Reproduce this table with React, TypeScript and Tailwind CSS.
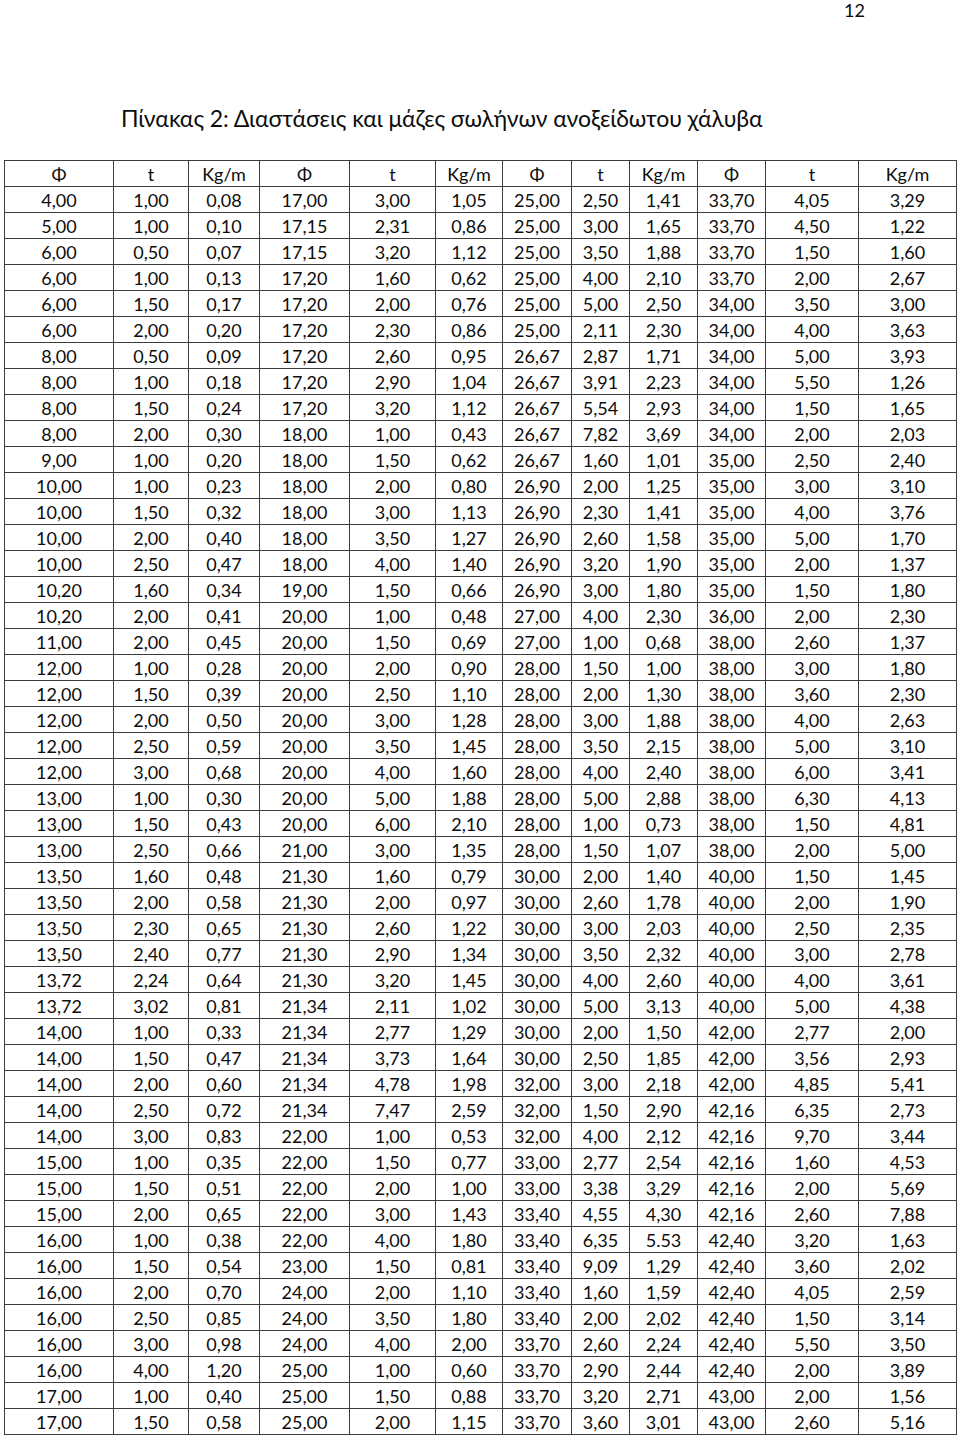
const rows = `4,00 1,00 0,08 17,00 3,00 1,05 25,00 2,50 1,41 33,70 4,05 3,29
5,00 1,00 0,10 17,15 2,31 0,86 25,00 3,00 1,65 33,70 4,50 1,22
6,00 0,50 0,07 17,15 3,20 1,12 25,00 3,50 1,88 33,70 1,50 1,60
6,00 1,00 0,13 17,20 1,60 0,62 25,00 4,00 2,10 33,70 2,00 2,67
6,00 1,50 0,17 17,20 2,00 0,76 25,00 5,00 2,50 34,00 3,50 3,00
6,00 2,00 0,20 17,20 2,30 0,86 25,00 2,11 2,30 34,00 4,00 3,63
8,00 0,50 0,09 17,20 2,60 0,95 26,67 2,87 1,71 34,00 5,00 3,93
8,00 1,00 0,18 17,20 2,90 1,04 26,67 3,91 2,23 34,00 5,50 1,26
8,00 1,50 0,24 17,20 3,20 1,12 26,67 5,54 2,93 34,00 1,50 1,65
8,00 2,00 0,30 18,00 1,00 0,43 26,67 7,82 3,69 34,00 2,00 2,03
9,00 1,00 0,20 18,00 1,50 0,62 26,67 1,60 1,01 35,00 2,50 2,40
10,00 1,00 0,23 18,00 2,00 0,80 26,90 2,00 1,25 35,00 3,00 3,10
10,00 1,50 0,32 18,00 3,00 1,13 26,90 2,30 1,41 35,00 4,00 3,76
10,00 2,00 0,40 18,00 3,50 1,27 26,90 2,60 1,58 35,00 5,00 1,70
10,00 2,50 0,47 18,00 4,00 1,40 26,90 3,20 1,90 35,00 2,00 1,37
10,20 1,60 0,34 19,00 1,50 0,66 26,90 3,00 1,80 35,00 1,50 1,80
10,20 2,00 0,41 20,00 1,00 0,48 27,00 4,00 2,30 36,00 2,00 2,30
11,00 2,00 0,45 20,00 1,50 0,69 27,00 1,00 0,68 38,00 2,60 1,37
12,00 1,00 0,28 20,00 2,00 0,90 28,00 1,50 1,00 38,00 3,00 1,80
12,00 1,50 0,39 20,00 2,50 1,10 28,00 2,00 1,30 38,00 3,60 2,30
12,00 2,00 0,50 20,00 3,00 1,28 28,00 3,00 1,88 38,00 4,00 2,63
12,00 2,50 0,59 20,00 3,50 1,45 28,00 3,50 2,15 38,00 5,00 3,10
12,00 3,00 0,68 20,00 4,00 1,60 28,00 4,00 2,40 38,00 6,00 3,41
13,00 1,00 0,30 20,00 5,00 1,88 28,00 5,00 2,88 38,00 6,30 4,13
13,00 1,50 0,43 20,00 6,00 2,10 28,00 1,00 0,73 38,00 1,50 4,81
13,00 2,50 0,66 21,00 3,00 1,35 28,00 1,50 1,07 38,00 2,00 5,00
13,50 1,60 0,48 21,30 1,60 0,79 30,00 2,00 1,40 40,00 1,50 1,45
13,50 2,00 0,58 21,30 2,00 0,97 30,00 2,60 1,78 40,00 2,00 1,90
13,50 2,30 0,65 21,30 2,60 1,22 30,00 3,00 2,03 40,00 2,50 2,35
13,50 2,40 0,77 21,30 2,90 1,34 30,00 3,50 2,32 40,00 3,00 2,78
13,72 2,24 0,64 21,30 3,20 1,45 30,00 4,00 2,60 40,00 4,00 3,61
13,72 3,02 0,81 21,34 2,11 1,02 30,00 5,00 3,13 40,00 5,00 4,38
14,00 1,00 0,33 21,34 2,77 1,29 30,00 2,00 1,50 42,00 2,77 2,00
14,00 1,50 0,47 21,34 3,73 1,64 30,00 2,50 1,85 42,00 3,56 2,93
14,00 2,00 0,60 21,34 4,78 1,98 32,00 3,00 2,18 42,00 4,85 5,41
14,00 2,50 0,72 21,34 7,47 2,59 32,00 1,50 2,90 42,16 6,35 2,73
14,00 3,00 0,83 22,00 1,00 0,53 32,00 4,00 2,12 42,16 9,70 3,44
15,00 1,00 0,35 22,00 1,50 0,77 33,00 2,77 2,54 42,16 1,60 4,53
15,00 1,50 0,51 22,00 2,00 1,00 33,00 3,38 3,29 42,16 2,00 5,69
15,00 2,00 0,65 22,00 3,00 1,43 33,40 4,55 4,30 42,16 2,60 7,88
16,00 1,00 0,38 22,00 4,00 1,80 33,40 6,35 5.53 42,40 3,20 1,63
16,00 1,50 0,54 23,00 1,50 0,81 33,40 9,09 1,29 42,40 3,60 2,02
16,00 2,00 0,70 24,00 2,00 1,10 33,40 1,60 1,59 42,40 4,05 2,59
16,00 2,50 0,85 24,00 3,50 1,80 33,40 2,00 2,02 42,40 1,50 3,14
16,00 3,00 0,98 24,00 4,00 2,00 33,70 2,60 2,24 42,40 5,50 3,50
16,00 4,00 1,20 25,00 1,00 0,60 33,70 2,90 2,44 42,40 2,00 3,89
17,00 1,00 0,40 25,00 1,50 0,88 33,70 3,20 2,71 43,00 2,00 1,56
17,00 1,50 0,58 25,00 2,00 1,15 33,70 3,60 3,01 43,00 2,60 5,16`
  .split("\n")
  .map((line) => line.trim().split(" "));

const header = ["Φ", "t", "Kg/m", "Φ", "t", "Kg/m", "Φ", "t", "Kg/m", "Φ", "t", "Kg/m"];

function Cell({ children }: { children: React.ReactNode }) {
  return (
    <div className="h-[26px] border-l border-t border-[#3c3c3c] flex items-center justify-center leading-none">
      {children}
    </div>
  );
}

export default function App() {
  return (
    <div
      className="w-[960px] h-[1436px] bg-white text-[#0d0d0d] overflow-hidden"
      style={{ fontFamily: 'Lato, "Open Sans", "Noto Sans", sans-serif' }}
    >
      <div className="h-[21px] flex justify-end pr-[95px] text-[18px] leading-[21px]">12</div>

      <div className="mt-[82px] pl-[121px] text-[23px] leading-[30px] tracking-[-0.1px]">
        Πίνακας 2: Διαστάσεις και μάζες σωλήνων ανοξείδωτου χάλυβα
      </div>

      <div className="mt-[27px] ml-[4px] w-fit grid grid-cols-[109px_75px_71px_90px_86px_67px_69px_58px_68px_68px_93px_98px] border-r border-b border-[#3c3c3c] text-[18px]">
        {header.map((h, i) => (
          <Cell key={"h" + i}>{h}</Cell>
        ))}
        {rows.map((r, ri) =>
          r.map((v, ci) => <Cell key={ri + "-" + ci}>{v}</Cell>)
        )}
      </div>
    </div>
  );
}
